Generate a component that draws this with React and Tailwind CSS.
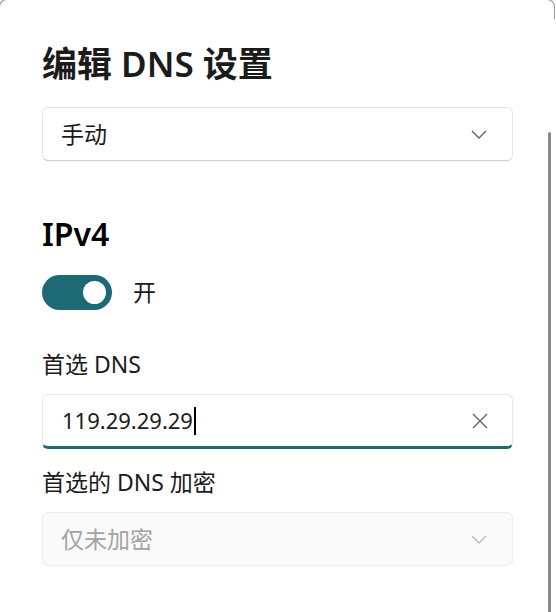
const font = { fontFamily: '"Noto Sans", "Noto Sans CJK SC", sans-serif' };

function Chevron({ color = "#5f5f5f" }) {
    return (
        <svg width="16" height="9" viewBox="0 0 16 9" fill="none">
            <path d="M1 1l7 7 7-7" stroke={color} strokeWidth="1.3" />
        </svg>
    );
}

function Select({ value, disabled }) {
    return (
        <div
            className={
                "h-[54px] rounded-[6px] border flex items-center justify-between pl-[18px] pr-[25px] " +
                (disabled
                    ? "bg-[#fafafa] border-[#ececec] text-[#a3a3a3]"
                    : "bg-white border-[#e5e5e5] border-b-[#d0d0d0] text-[#1b1b1b] shadow-[0_1px_0_rgba(0,0,0,0.03)]")
            }
        >
            <span className="text-[23px]">{value}</span>
            <Chevron color={disabled ? "#b8b8b8" : "#5f5f5f"} />
        </div>
    );
}

export default function App() {
    return (
        <div className="w-[556px] h-[612px] bg-white relative overflow-hidden" style={font}>
            {/* dialog corner */}
            <div className="absolute -left-[1px] -top-[1px] w-[20px] h-[20px] rounded-tl-[8px] border-l border-t border-[#9a9a9a]" />
            <div className="absolute right-[1px] -top-[1px] w-[20px] h-[20px] rounded-tr-[8px] border-r border-t border-[#9a9a9a]" />

            {/* scrollbar */}
            <div className="absolute left-[548px] top-[132px] w-[3px] h-[490px] rounded-full bg-[#8a8a8a]" />

            <div className="pl-[42px] pr-[43px] pt-[40px] flex flex-col">
                <h1 className="text-[35px] font-semibold text-[#1b1b1b] leading-[48px]">编辑 DNS 设置</h1>

                <div className="mt-[19px]">
                    <Select value="手动" />
                </div>

                <h2 className="mt-[53px] text-[32px] font-semibold text-black leading-[40px]">IPv4</h2>

                <div className="mt-[21px] flex items-center gap-[21px]">
                    <div className="w-[70px] h-[35px] rounded-full bg-[#1d6a74] flex items-center justify-end pr-[6px]">
                        <div className="w-[23px] h-[23px] rounded-full bg-white" />
                    </div>
                    <span className="text-[23px] text-[#1b1b1b]">开</span>
                </div>

                <label className="mt-[38px] text-[23px] text-[#1b1b1b] leading-[32px]">首选 DNS</label>

                <div className="mt-[14px] h-[55px] rounded-[6px] border border-[#e8e8e8] border-b-[3px] border-b-[#1d6a74] bg-white flex items-center justify-between pl-[19px] pr-[24px]">
                    <div className="flex items-center text-[22px] text-[#1b1b1b]">
                        <span>119.29.29.29</span>
                        <span className="w-[2px] h-[28px] bg-black ml-[1px]" />
                    </div>
                    <svg width="16" height="16" viewBox="0 0 16 16" fill="none">
                        <path d="M1 1l14 14M15 1L1 15" stroke="#5f5f5f" strokeWidth="1.3" />
                    </svg>
                </div>

                <label className="mt-[17px] text-[23px] text-[#1b1b1b] leading-[32px]">首选的 DNS 加密</label>

                <div className="mt-[14px]">
                    <Select value="仅未加密" disabled />
                </div>
            </div>
        </div>
    );
}
